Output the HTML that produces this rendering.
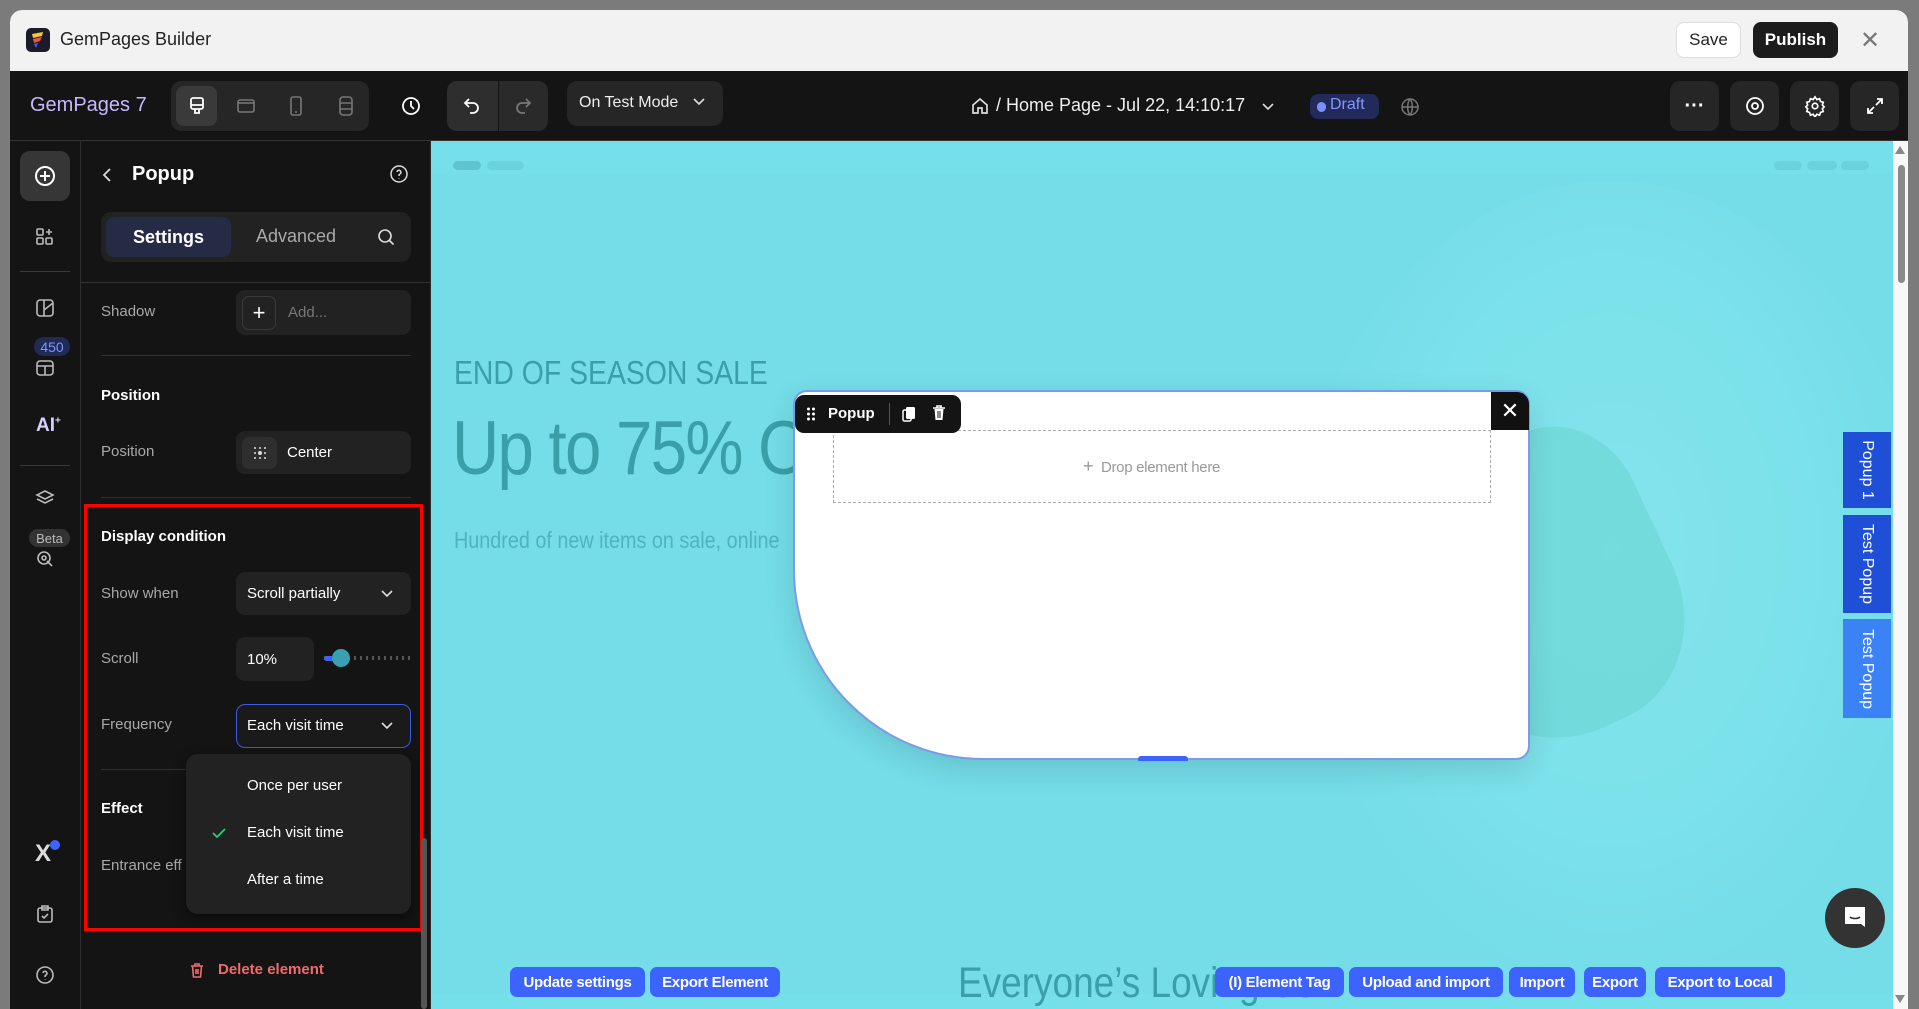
<!DOCTYPE html>
<html><head><meta charset="utf-8"><style>
*{box-sizing:border-box;margin:0;padding:0}
html,body{width:1919px;height:1009px;overflow:hidden}
body{background:#7b7b7b;font-family:"Liberation Sans",sans-serif;position:relative}
.a{position:absolute}
.win{left:10px;top:10px;width:1898px;height:999px;background:#141414;border-radius:12px 12px 0 0;overflow:hidden}
.title{left:10px;top:10px;width:1898px;height:61px;background:#f2f2f2;border-radius:12px 12px 0 0}
.tb{background:#262626;border-radius:10px}
.ib{display:flex;align-items:center;justify-content:center}
.lbl{color:#a8a8a8;font-size:15px}
.h{color:#fff;font-size:15px;font-weight:bold}
.box{background:#222;border-radius:9px}
.btn{background:#3d63ff;color:#fff;font-size:15px;font-weight:bold;border-radius:7px;height:30px;top:967px;display:flex;align-items:center;justify-content:center;letter-spacing:-0.3px}
.tab{background:#1f4fd6;color:#fff;font-size:16px;left:1843px;width:48px;display:flex;align-items:center;justify-content:center}
.tab span{transform:rotate(90deg);white-space:nowrap;display:block}
.nar{transform:scaleX(.86);transform-origin:left top;white-space:nowrap;color:#3a9fa8}
</style></head><body>
<div class="a win"></div>
<div class="a title"></div>
<svg class="a" style="left:26px;top:28px" width="24" height="24" viewBox="0 0 24 24"><rect width="24" height="24" rx="5" fill="#1b1b2a"/><path d="M6 6 L17 4 L16 8 L7 10Z" fill="#f5c83a"/><path d="M7 11 L16 9 L14 13 L8 15Z" fill="#f0533c"/><path d="M8 16 L12 15 L10 20Z" fill="#3d63ff"/></svg>
<div class="a" style="left:60px;top:29px;font-size:18px;color:#222">GemPages Builder</div>
<div class="a ib" style="left:1676px;top:22px;width:65px;height:36px;background:#fff;border:1px solid #ddd;border-radius:8px;font-size:17px;color:#222">Save</div>
<div class="a ib" style="left:1753px;top:22px;width:85px;height:36px;background:#1c1c1c;border-radius:8px;font-size:17px;color:#fff;font-weight:bold">Publish</div>
<div class="a" style="left:1860px;top:26px;font-size:24px;color:#777">✕</div>
<div class="a" style="left:10px;top:140px;width:1898px;height:1px;background:#333"></div>
<div class="a" style="left:30px;top:94px;font-size:20px;color:#c7b7ff">GemPages 7</div>
<div class="a tb" style="left:171px;top:81px;width:198px;height:50px"></div>
<div class="a" style="left:176px;top:86px;width:41px;height:40px;background:#3a3a3a;border-radius:8px"></div>
<svg class="a" style="left:186px;top:95px" width="22" height="22" viewBox="0 0 22 22" fill="none" stroke="#fff" stroke-width="1.8"><rect x="5" y="3" width="12" height="11" rx="2"/><path d="M5 10h12M9 14v4M13 14v4M8 18h6"/></svg>
<svg class="a" style="left:236px;top:96px" width="20" height="20" viewBox="0 0 20 20" fill="none" stroke="#777" stroke-width="1.6"><rect x="2" y="4" width="16" height="12" rx="2"/><path d="M2 7h16"/></svg>
<svg class="a" style="left:286px;top:95px" width="20" height="22" viewBox="0 0 20 22" fill="none" stroke="#777" stroke-width="1.6"><rect x="5" y="2" width="10" height="18" rx="2"/><path d="M9 17h2"/></svg>
<svg class="a" style="left:336px;top:95px" width="20" height="22" viewBox="0 0 20 22" fill="none" stroke="#777" stroke-width="1.6"><rect x="4" y="2" width="12" height="18" rx="3"/><path d="M4 8h12M4 14h12"/></svg>
<svg class="a" style="left:400px;top:95px" width="22" height="22" viewBox="0 0 22 22" fill="none" stroke="#fff" stroke-width="1.8"><circle cx="11" cy="11" r="8"/><path d="M11 6v5l3 3"/></svg>
<div class="a tb" style="left:447px;top:81px;width:51px;height:50px;border-radius:10px 0 0 10px;background:#2e2e2e"></div>
<div class="a tb" style="left:499px;top:81px;width:49px;height:50px;border-radius:0 10px 10px 0;background:#2a2a2a"></div>
<svg class="a" style="left:461px;top:95px" width="22" height="22" viewBox="0 0 22 22" fill="none" stroke="#fff" stroke-width="1.8"><path d="M8 4L4 8l4 4"/><path d="M4 8h8a5 5 0 0 1 0 10h-3"/></svg>
<svg class="a" style="left:512px;top:95px" width="22" height="22" viewBox="0 0 22 22" fill="none" stroke="#777" stroke-width="1.8"><path d="M14 4l4 4-4 4"/><path d="M18 8h-8a5 5 0 0 0 0 10h3"/></svg>
<div class="a tb" style="left:567px;top:81px;width:156px;height:45px"></div>
<div class="a" style="left:579px;top:94px;font-size:16px;color:#eee">On Test Mode</div>
<svg class="a" style="left:692px;top:97px" width="14" height="10" viewBox="0 0 14 10" fill="none" stroke="#ddd" stroke-width="1.6"><path d="M2 2l5 5 5-5"/></svg>
<svg class="a" style="left:970px;top:96px" width="20" height="20" viewBox="0 0 20 20" fill="none" stroke="#ddd" stroke-width="1.7"><path d="M3 9l7-6 7 6v8h-5v-5H8v5H3z"/></svg>
<div class="a" style="left:996px;top:95px;font-size:18px;color:#eee">/ Home Page - Jul 22, 14:10:17</div>
<svg class="a" style="left:1261px;top:102px" width="14" height="10" viewBox="0 0 14 10" fill="none" stroke="#ddd" stroke-width="1.6"><path d="M2 2l5 5 5-5"/></svg>
<div class="a" style="left:1310px;top:94px;width:69px;height:25px;background:#222a5a;border-radius:8px"></div>
<div class="a" style="left:1317px;top:102px;width:9px;height:10px;background:#7b8fff;border-radius:5px"></div>
<div class="a" style="left:1330px;top:96px;font-size:16px;color:#8496ff">Draft</div>
<svg class="a" style="left:1399px;top:96px" width="22" height="22" viewBox="0 0 22 22" fill="none" stroke="#777" stroke-width="1.5"><circle cx="11" cy="11" r="8"/><path d="M3 11h16M11 3c3 3 3 13 0 16M11 3c-3 3-3 13 0 16"/></svg>
<div class="a tb ib" style="left:1670px;top:81px;width:49px;height:50px;color:#fff;font-size:20px;font-weight:bold">···</div>
<div class="a tb ib" style="left:1730px;top:81px;width:49px;height:50px"><svg width="22" height="22" viewBox="0 0 22 22" fill="none" stroke="#fff" stroke-width="1.8"><circle cx="11" cy="11" r="8"/><circle cx="11" cy="11" r="3"/></svg></div>
<div class="a tb ib" style="left:1790px;top:81px;width:49px;height:50px"><svg width="22" height="22" viewBox="0 0 24 24" fill="none" stroke="#fff" stroke-width="1.8"><circle cx="12" cy="12" r="3"/><path d="M12 2l2 3 3-1 1 3 3 1-1 3 2 2-2 2 1 3-3 1-1 3-3-1-2 3-2-3-3 1-1-3-3-1 1-3-2-2 2-2-1-3 3-1 1-3 3 1z"/></svg></div>
<div class="a tb ib" style="left:1850px;top:81px;width:49px;height:50px"><svg width="22" height="22" viewBox="0 0 22 22" fill="none" stroke="#fff" stroke-width="1.8"><path d="M13 4h5v5M18 4l-6 6M9 18H4v-5M4 18l6-6"/></svg></div>
<!-- left rail -->
<div class="a" style="left:80px;top:141px;width:1px;height:868px;background:#2e2e2e"></div>
<div class="a" style="left:20px;top:151px;width:50px;height:50px;background:#363636;border-radius:10px"></div>
<svg class="a" style="left:33px;top:164px" width="24" height="24" viewBox="0 0 24 24" fill="none" stroke="#fff" stroke-width="2"><circle cx="12" cy="12" r="9"/><path d="M12 7v10M7 12h10"/></svg>
<svg class="a" style="left:35px;top:227px" width="20" height="20" viewBox="0 0 20 20" fill="none" stroke="#bbb" stroke-width="1.6"><rect x="2" y="2" width="6" height="6" rx="1"/><rect x="2" y="11" width="6" height="6" rx="1"/><rect x="11" y="11" width="6" height="6" rx="1"/><path d="M14 2v6M11 5h6"/></svg>
<div class="a" style="left:20px;top:271px;width:50px;height:1px;background:#3a3a3a"></div>
<svg class="a" style="left:35px;top:298px" width="20" height="20" viewBox="0 0 20 20" fill="none" stroke="#bbb" stroke-width="1.6"><rect x="2" y="2" width="16" height="16" rx="3"/><path d="M9 2v16M9 12l9-7"/></svg>
<div class="a ib" style="left:34px;top:337px;width:36px;height:19px;background:#1f2a55;border-radius:10px;color:#7f95ff;font-size:14px">450</div>
<svg class="a" style="left:35px;top:358px" width="20" height="20" viewBox="0 0 20 20" fill="none" stroke="#bbb" stroke-width="1.6"><rect x="2" y="3" width="16" height="14" rx="3"/><path d="M2 8h16M10 8v9"/></svg>
<div class="a" style="left:36px;top:415px;font-size:19px;font-weight:bold;color:#d8d0ff">AI<sup style="font-size:10px">+</sup></div>
<div class="a" style="left:20px;top:465px;width:50px;height:1px;background:#3a3a3a"></div>
<svg class="a" style="left:35px;top:488px" width="20" height="20" viewBox="0 0 20 20" fill="none" stroke="#bbb" stroke-width="1.6"><path d="M10 3l8 4-8 4-8-4z M2 11l8 4 8-4"/></svg>
<div class="a ib" style="left:29px;top:529px;width:41px;height:18px;background:#333;border-radius:9px;color:#bbb;font-size:13px">Beta</div>
<svg class="a" style="left:35px;top:549px" width="20" height="20" viewBox="0 0 20 20" fill="none" stroke="#bbb" stroke-width="1.6"><circle cx="9" cy="9" r="6"/><circle cx="9" cy="9" r="2"/><path d="M12 12l5 5"/></svg>
<div class="a" style="left:35px;top:840px;font-size:24px;font-weight:bold;color:#ddd">X</div>
<div class="a" style="left:50px;top:840px;width:10px;height:10px;background:#3d63ff;border-radius:5px"></div>
<svg class="a" style="left:35px;top:904px" width="20" height="20" viewBox="0 0 20 20" fill="none" stroke="#bbb" stroke-width="1.6"><rect x="3" y="4" width="14" height="14" rx="2"/><path d="M7 2h6v4H7zM7 12l2 2 4-4"/></svg>
<svg class="a" style="left:35px;top:965px" width="20" height="20" viewBox="0 0 20 20" fill="none" stroke="#bbb" stroke-width="1.6"><circle cx="10" cy="10" r="8"/><path d="M8 8a2 2 0 1 1 3 2c-1 .5-1 1-1 2M10 14.5v.5"/></svg>
<!-- panel -->
<div class="a" style="left:430px;top:141px;width:1px;height:868px;background:#2e2e2e"></div>
<svg class="a" style="left:100px;top:166px" width="14" height="18" viewBox="0 0 14 18" fill="none" stroke="#ddd" stroke-width="1.8"><path d="M10 3L4 9l6 6"/></svg>
<div class="a" style="left:132px;top:163px;font-size:20px;font-weight:bold;color:#fff">Popup</div>
<svg class="a" style="left:389px;top:164px" width="20" height="20" viewBox="0 0 20 20" fill="none" stroke="#ddd" stroke-width="1.5"><circle cx="10" cy="10" r="8"/><path d="M8 8a2 2 0 1 1 3 2c-1 .5-1 1-1 2M10 14.5v.5"/></svg>
<div class="a" style="left:101px;top:212px;width:310px;height:50px;background:#222;border-radius:10px"></div>
<div class="a ib" style="left:106px;top:217px;width:125px;height:40px;background:#252a45;border-radius:8px;color:#fff;font-size:18px;font-weight:bold">Settings</div>
<div class="a" style="left:256px;top:226px;color:#aaa;font-size:18px">Advanced</div>
<svg class="a" style="left:376px;top:227px" width="20" height="20" viewBox="0 0 20 20" fill="none" stroke="#ddd" stroke-width="1.6"><circle cx="9" cy="9" r="6"/><path d="M13.5 13.5l4 4"/></svg>
<div class="a" style="left:81px;top:282px;width:349px;height:1px;background:#333"></div>
<div class="a lbl" style="left:101px;top:303px">Shadow</div>
<div class="a box" style="left:236px;top:290px;width:175px;height:45px"></div>
<div class="a ib" style="left:242px;top:296px;width:34px;height:34px;border:1px solid #3a3a3a;border-radius:7px;color:#fff;font-size:22px">+</div>
<div class="a" style="left:288px;top:304px;color:#777;font-size:15px">Add...</div>
<div class="a" style="left:101px;top:355px;width:310px;height:1px;background:#333"></div>
<div class="a h" style="left:101px;top:387px">Position</div>
<div class="a lbl" style="left:101px;top:443px">Position</div>
<div class="a box" style="left:236px;top:431px;width:175px;height:43px"></div>
<div class="a ib" style="left:242px;top:437px;width:35px;height:32px;background:#2e2e2e;border-radius:7px"><svg width="16" height="16" viewBox="0 0 16 16" fill="#ddd"><circle cx="3" cy="3" r="1"/><circle cx="8" cy="3" r="1"/><circle cx="13" cy="3" r="1"/><circle cx="3" cy="8" r="1"/><circle cx="8" cy="8" r="2"/><circle cx="13" cy="8" r="1"/><circle cx="3" cy="13" r="1"/><circle cx="8" cy="13" r="1"/><circle cx="13" cy="13" r="1"/></svg></div>
<div class="a" style="left:287px;top:444px;color:#fff;font-size:15px">Center</div>
<div class="a" style="left:101px;top:497px;width:310px;height:1px;background:#333"></div>
<div class="a h" style="left:101px;top:528px">Display condition</div>
<div class="a lbl" style="left:101px;top:585px">Show when</div>
<div class="a box" style="left:236px;top:572px;width:175px;height:43px"></div>
<div class="a" style="left:247px;top:585px;color:#fff;font-size:15px">Scroll partially</div>
<svg class="a" style="left:380px;top:589px" width="14" height="10" viewBox="0 0 14 10" fill="none" stroke="#ddd" stroke-width="1.6"><path d="M2 2l5 5 5-5"/></svg>
<div class="a lbl" style="left:101px;top:650px">Scroll</div>
<div class="a box" style="left:236px;top:637px;width:78px;height:44px"></div>
<div class="a" style="left:247px;top:651px;color:#fff;font-size:15px">10%</div>
<div class="a" style="left:324px;top:656px;width:87px;height:4px;background:repeating-linear-gradient(90deg,#555 0 2px,transparent 2px 6px)"></div>
<div class="a" style="left:324px;top:656px;width:18px;height:5px;background:#3d63ff;border-radius:3px"></div>
<div class="a" style="left:332px;top:649px;width:18px;height:18px;background:#3a9fb0;border-radius:9px"></div>
<div class="a lbl" style="left:101px;top:716px">Frequency</div>
<div class="a" style="left:236px;top:704px;width:175px;height:44px;background:#1a1a1a;border:1.5px solid #3b5be0;border-radius:9px"></div>
<div class="a" style="left:247px;top:717px;color:#fff;font-size:15px">Each visit time</div>
<svg class="a" style="left:380px;top:721px" width="14" height="10" viewBox="0 0 14 10" fill="none" stroke="#ddd" stroke-width="1.6"><path d="M2 2l5 5 5-5"/></svg>
<div class="a" style="left:101px;top:769px;width:310px;height:1px;background:#333"></div>
<div class="a h" style="left:101px;top:800px">Effect</div>
<div class="a lbl" style="left:101px;top:857px">Entrance eff</div>
<div class="a" style="left:186px;top:754px;width:225px;height:160px;background:#222;border-radius:12px;box-shadow:0 4px 12px rgba(0,0,0,.5)"></div>
<div class="a" style="left:247px;top:777px;color:#fff;font-size:15px">Once per user</div>
<svg class="a" style="left:211px;top:826px" width="16" height="14" viewBox="0 0 16 14" fill="none" stroke="#2ecc71" stroke-width="1.8"><path d="M2 7l4 4 8-8"/></svg>
<div class="a" style="left:247px;top:824px;color:#fff;font-size:15px">Each visit time</div>
<div class="a" style="left:247px;top:871px;color:#fff;font-size:15px">After a time</div>
<div class="a" style="left:84px;top:504px;width:339px;height:427px;border:3px solid #f00"></div>
<svg class="a" style="left:188px;top:961px" width="18" height="18" viewBox="0 0 18 18" fill="none" stroke="#f26b6b" stroke-width="1.6"><path d="M3 5h12M7 5V3h4v2M4.5 5l1 11h7l1-11M8 8v5M10 8v5"/></svg>
<div class="a" style="left:218px;top:961px;color:#f26b6b;font-size:15px;font-weight:bold">Delete element</div>
<div class="a" style="left:421px;top:838px;width:6px;height:171px;background:#555;border-radius:3px"></div>
<!-- canvas -->
<div class="a" style="left:431px;top:141px;width:1462px;height:868px;background:#76e0ea;overflow:hidden">
  <div class="a" style="left:0;top:33px;width:1462px;height:820px;background:#74dde8"></div>
  <div class="a" style="left:860px;top:40px;width:640px;height:820px;border-radius:50%;background:radial-gradient(ellipse at 50% 45%,#84e4ec 0%,#7be1ea 45%,rgba(118,224,234,0) 70%)"></div>
  <div class="a" style="left:980px;top:300px;width:260px;height:300px;border-radius:40% 30% 40% 50%;background:#6ad6d2;opacity:.6;transform:rotate(-25deg)"></div>
  <div class="a" style="left:22px;top:20px;width:28px;height:9px;background:#5ec5d0;border-radius:5px"></div>
  <div class="a" style="left:56px;top:20px;width:37px;height:9px;background:#6ad2dc;border-radius:5px"></div>
  <div class="a" style="left:1343px;top:20px;width:28px;height:9px;background:#6ad2dc;border-radius:5px"></div>
  <div class="a" style="left:1376px;top:20px;width:30px;height:9px;background:#6ad2dc;border-radius:5px"></div>
  <div class="a" style="left:1410px;top:20px;width:28px;height:9px;background:#6ad2dc;border-radius:5px"></div>
  <div class="a nar" style="left:23px;top:213px;font-size:33px">END OF SEASON SALE</div>
  <div class="a nar" style="left:21px;top:264px;font-size:76px;letter-spacing:-2px">Up to 75% Off</div>
  <div class="a nar" style="left:23px;top:386px;font-size:23px;color:#4fb4bd">Hundred of new items on sale, online</div>
  <div class="a nar" style="left:527px;top:818px;font-size:43px">Everyone’s Loving Us</div>
</div>
<!-- popup -->
<div class="a" style="left:793px;top:390px;width:737px;height:370px;background:#fff;border:2px solid #7b9be8;border-radius:14px 14px 14px 190px / 14px 14px 14px 190px;box-shadow:0 10px 30px rgba(0,0,0,.12)"></div>
<div class="a" style="left:833px;top:430px;width:658px;height:73px;border:1px dashed #aaa"></div>
<div class="a" style="left:1083px;top:456px;color:#999;font-size:15px;letter-spacing:-.3px"><span style="font-size:18px">+</span>&nbsp;&nbsp;Drop element here</div>
<div class="a" style="left:795px;top:395px;width:166px;height:38px;background:#141414;border-radius:9px"></div>
<svg class="a" style="left:806px;top:406px" width="10" height="16" viewBox="0 0 10 16" fill="#fff"><circle cx="2.5" cy="3" r="1.5"/><circle cx="7.5" cy="3" r="1.5"/><circle cx="2.5" cy="8" r="1.5"/><circle cx="7.5" cy="8" r="1.5"/><circle cx="2.5" cy="13" r="1.5"/><circle cx="7.5" cy="13" r="1.5"/></svg>
<div class="a" style="left:828px;top:405px;color:#fff;font-size:15px;font-weight:bold">Popup</div>
<div class="a" style="left:889px;top:403px;width:1px;height:22px;background:#555"></div>
<svg class="a" style="left:900px;top:405px" width="18" height="18" viewBox="0 0 18 18" fill="#fff"><rect x="6" y="2" width="9" height="12" rx="1.5"/><rect x="3" y="5" width="8" height="11" rx="1.5" fill="none" stroke="#fff" stroke-width="1.5"/></svg>
<svg class="a" style="left:930px;top:404px" width="18" height="18" viewBox="0 0 18 18"><path d="M3 4h12M7 4V2h4v2" stroke="#fff" stroke-width="1.6" fill="none"/><path d="M4.5 5h9l-1 11h-7z" fill="#fff"/><path d="M8 7v7M10 7v7" stroke="#141414" stroke-width="1"/></svg>
<div class="a ib" style="left:1491px;top:392px;width:38px;height:38px;background:#111;border-radius:0 12px 0 0;color:#fff;font-size:22px">✕</div>
<div class="a" style="left:1138px;top:756px;width:50px;height:5px;background:#3d63ff;border-radius:3px 3px 0 0"></div>
<div class="a tab" style="top:432px;height:76px"><span>Popup 1</span></div>
<div class="a tab" style="top:515px;height:98px"><span>Test Popup</span></div>
<div class="a tab" style="top:619px;height:99px;background:#3b82f6"><span>Test Popup</span></div>
<div class="a ib" style="left:1825px;top:888px;width:60px;height:60px;background:#333;border-radius:50%"><svg width="26" height="28" viewBox="0 0 26 28"><path d="M3 3h20v20l-4-3H3z" fill="#fff"/><path d="M8 13c2 2 8 2 10 0" stroke="#333" stroke-width="1.6" fill="none"/></svg></div>
<div class="a btn" style="left:510px;width:135px">Update settings</div>
<div class="a btn" style="left:650px;width:130px">Export Element</div>
<div class="a btn" style="left:1215px;width:129px">(I) Element Tag</div>
<div class="a btn" style="left:1349px;width:154px">Upload and import</div>
<div class="a btn" style="left:1509px;width:66px">Import</div>
<div class="a btn" style="left:1584px;width:62px">Export</div>
<div class="a btn" style="left:1655px;width:130px">Export to Local</div>
<div class="a" style="left:1893px;top:141px;width:15px;height:868px;background:#f8f8f8"></div>
<div class="a" style="left:1898px;top:165px;width:7px;height:118px;background:#8a8a8a;border-radius:4px"></div>
<div class="a" style="left:1895px;top:146px;width:0;height:0;border-left:5px solid transparent;border-right:5px solid transparent;border-bottom:8px solid #888"></div>
<div class="a" style="left:1895px;top:995px;width:0;height:0;border-left:5px solid transparent;border-right:5px solid transparent;border-top:8px solid #888"></div>
</body></html>
